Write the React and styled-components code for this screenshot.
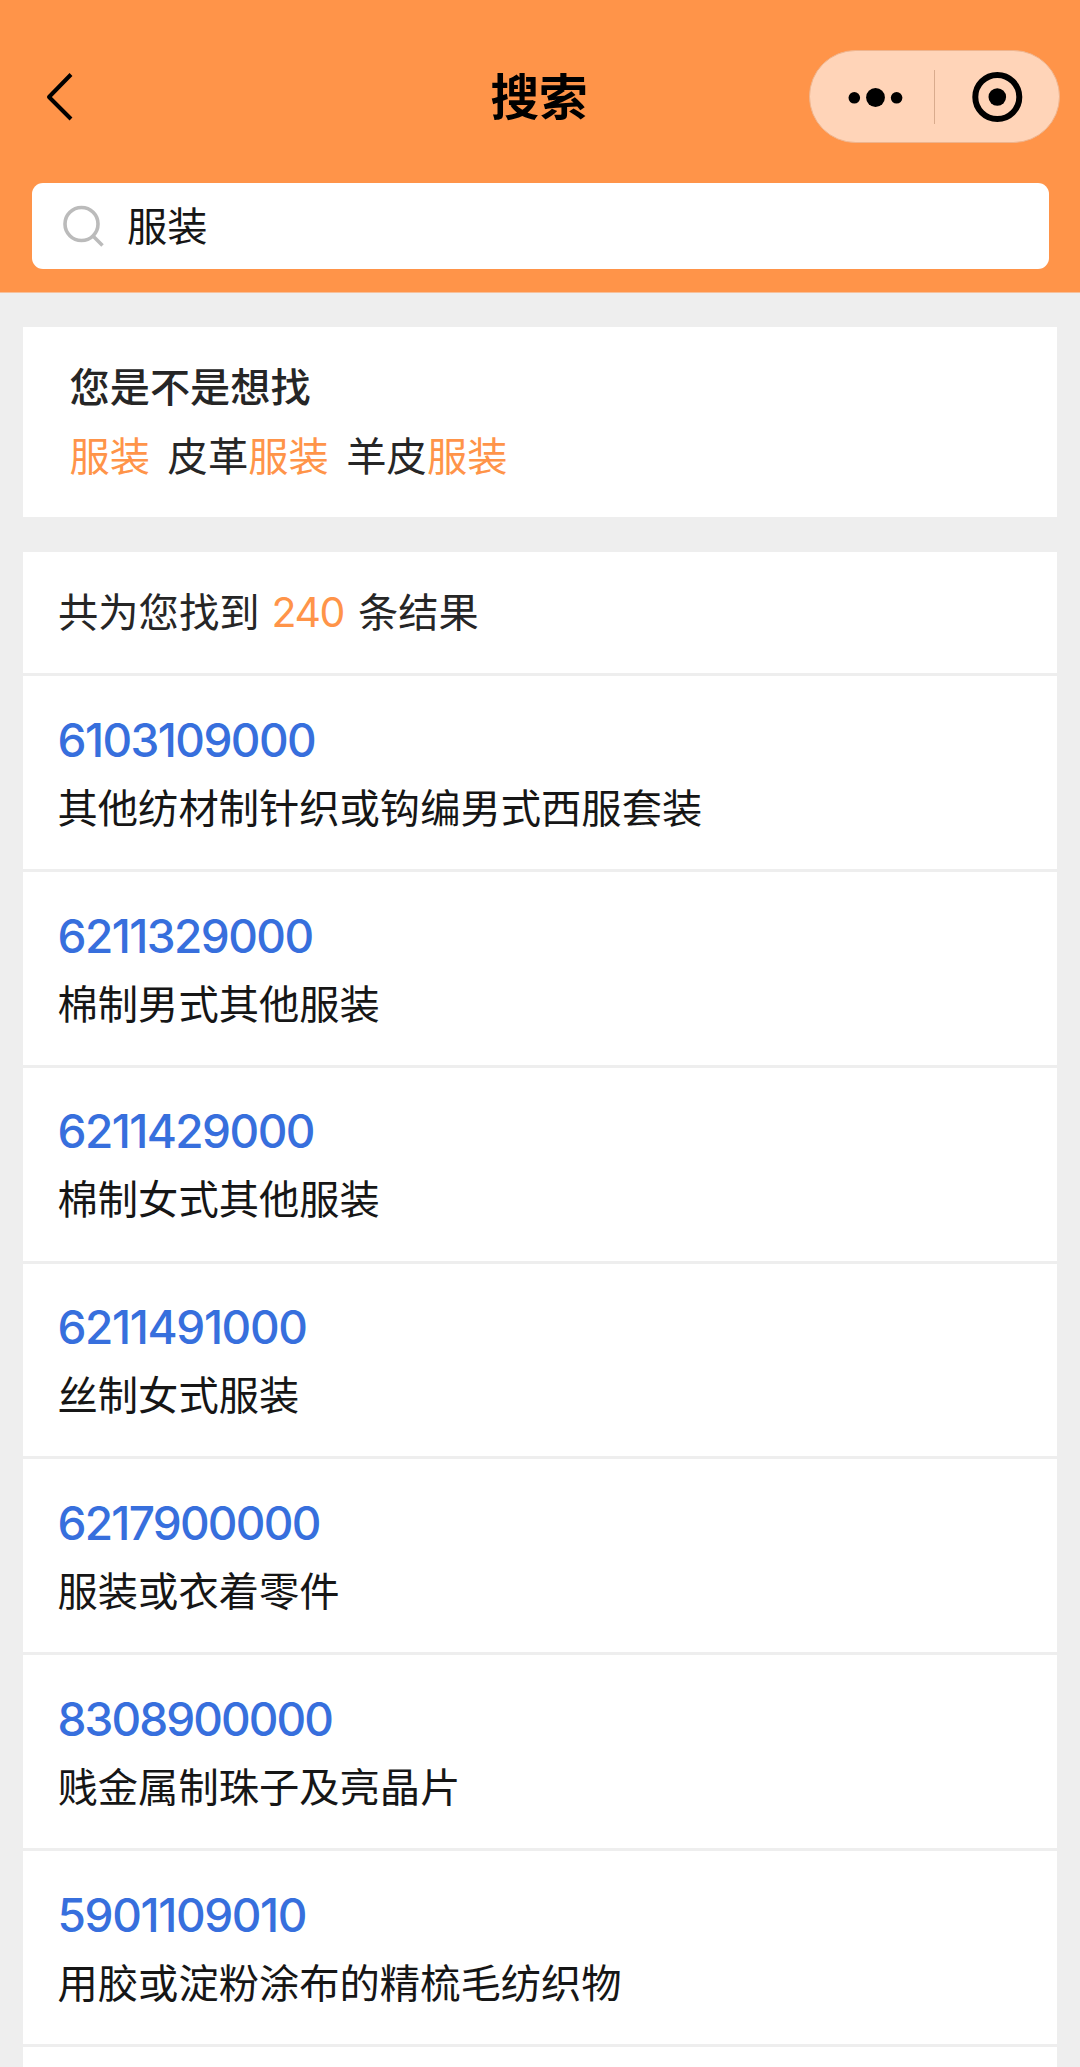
import React, { Component } from 'react';
import styled, { createGlobalStyle } from 'styled-components';

const GlobalStyle = createGlobalStyle`
	* {
		box-sizing: border-box;
	}

	body {
		margin: 0;
		height: 2067px;
		overflow: hidden;
		background: #eeeeee;
		font-family: 'Noto Sans CJK SC', sans-serif;
		font-size: 40.3px;
		color: #262626;
	}
`;

const Page = styled.div`
	height: 2067px;
	overflow: hidden;
`;

const Header = styled.header`
	height: 293px;
	padding: 50px 21px 0 32px;
	background: #ff9449;
	border-bottom: 1px solid #f7c09a;
`;

const NavBar = styled.div`
	display: grid;
	grid-template-columns: 237px 1fr 250px;
	align-items: center;
	height: 93px;
`;

const BackIcon = styled.svg`
	width: 30px;
	height: 50px;
	margin-left: 13px;
`;

const Title = styled.h1`
	margin: 0;
	padding-bottom: 5px;
	font-size: 48.6px;
	line-height: 70px;
	font-weight: 700;
	text-align: center;
	color: #000;
`;

const Capsule = styled.div`
	display: flex;
	align-items: center;
	width: 251px;
	height: 93px;
	border: 1px solid #efb48d;
	border-radius: 47px;
	background: #ffd4b8;
`;

const CapsuleIcon = styled.svg`
	width: ${props => props.$width}px;
	height: 54px;
`;

const CapsuleLine = styled.div`
	width: 1px;
	height: 54px;
	background: #d9ab8d;
`;

const SearchBox = styled.div`
	display: flex;
	align-items: center;
	width: 1017px;
	height: 86px;
	margin-top: 40px;
	padding-left: 30px;
	border-radius: 11px;
	background: #fff;
	color: #161616;
`;

const SearchIcon = styled.svg`
	width: 42px;
	height: 42px;
	margin-right: 23px;
`;

const SearchText = styled.span`
	padding-bottom: 5px;
`;

const Content = styled.main`
	padding: 34px 23px 0;
`;

const Suggest = styled.section`
	height: 190px;
	margin-bottom: 35px;
	padding: 23px 46.5px 0;
	background: #fff;
`;

const SuggestTitle = styled.h2`
	margin: 0;
	font-size: 40.2px;
	line-height: 69px;
	font-weight: 500;
`;

const SuggestList = styled.div`
	display: flex;
	gap: 17.5px;
	line-height: 69px;
`;

const Highlight = styled.span`
	color: #ff9449;
`;

const Results = styled.section`
	background: #fff;
`;

const Count = styled.div`
	height: 124px;
	padding-left: 35px;
	line-height: 116px;
	border-bottom: 3px solid #eee;
`;

const CountNumber = styled.span`
	margin: 0 14px 0 12px;
	font-family: Inter, sans-serif;
	font-size: 41px;
	letter-spacing: -1.4px;
	font-weight: 400;
	color: #ff9449;
`;

const Row = styled.div`
	height: 195.85px;
	padding: 33.7px 34.5px 0;
	border-bottom: 3px solid #eee;
`;

const Code = styled.div`
	font-family: Inter, sans-serif;
	font-size: 46px;
	line-height: 60px;
	font-weight: 500;
	letter-spacing: ${props => -1.95 + props.$ones * 0.19}px;
	color: #376fdd;
`;

const Name = styled.div`
	margin-top: 6px;
	line-height: 60px;
	color: #161616;
`;

const keyword = '服装';

const suggestions = ['服装', '皮革服装', '羊皮服装'];

const results = [
	{ code: '6103109000', name: '其他纺材制针织或钩编男式西服套装' },
	{ code: '6211329000', name: '棉制男式其他服装' },
	{ code: '6211429000', name: '棉制女式其他服装' },
	{ code: '6211491000', name: '丝制女式服装' },
	{ code: '6217900000', name: '服装或衣着零件' },
	{ code: '8308900000', name: '贱金属制珠子及亮晶片' },
	{ code: '5901109010', name: '用胶或淀粉涂布的精梳毛纺织物' }
];

class App extends Component {
	render() {
		return (
			<Page>
				<GlobalStyle />
				<Header>
					<NavBar>
						<BackIcon viewBox="0 0 30 50" fill="none" stroke="#000" strokeWidth="4">
							<path d="M26 2.5 4 25 26 47" strokeLinejoin="round" />
						</BackIcon>
						<Title>搜索</Title>
						<Capsule>
							<CapsuleIcon $width={124} viewBox="0 0 124 54">
								<circle cx="44.3" cy="27.8" r="5.8" />
								<circle cx="65.5" cy="27.5" r="9.4" />
								<circle cx="86.6" cy="27.8" r="5.8" />
							</CapsuleIcon>
							<CapsuleLine />
							<CapsuleIcon $width={124} viewBox="0 0 124 54">
								<circle cx="62.3" cy="27" r="22" fill="none" stroke="#000" strokeWidth="6" />
								<circle cx="62.3" cy="27" r="8.8" />
							</CapsuleIcon>
						</Capsule>
					</NavBar>
					<SearchBox>
						<SearchIcon viewBox="0 0 42 42" fill="none" stroke="#bbb" strokeWidth="3.6">
							<circle cx="19.5" cy="19" r="16.5" />
							<path d="M31 31 40.5 40.5" />
						</SearchIcon>
						<SearchText>{keyword}</SearchText>
					</SearchBox>
				</Header>
				<Content>
					<Suggest>
						<SuggestTitle>您是不是想找</SuggestTitle>
						<SuggestList>
							{suggestions.map(item => (
								<div key={item}>
									{item.replace(keyword, '')}
									<Highlight>{keyword}</Highlight>
								</div>
							))}
						</SuggestList>
					</Suggest>
					<Results>
						<Count>
							共为您找到
							<CountNumber>240</CountNumber>
							条结果
						</Count>
						{results.map(item => (
							<Row key={item.code}>
								<Code $ones={item.code.split('1').length - 1}>{item.code}</Code>
								<Name>{item.name}</Name>
							</Row>
						))}
						<Row />
					</Results>
				</Content>
			</Page>
		);
	}
}

export default App;
